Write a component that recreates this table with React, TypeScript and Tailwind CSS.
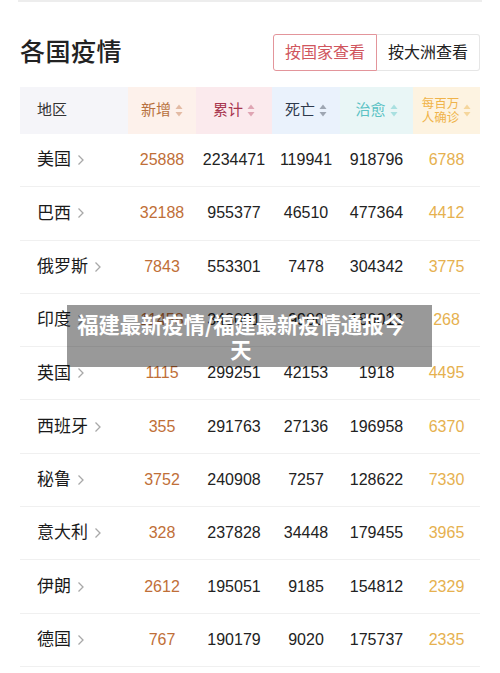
import React from "react";

type Row = [string, string, string, string, string, string];

const rows: Row[] = [
  ["美国", "25888", "2234471", "119941", "918796", "6788"],
  ["巴西", "32188", "955377", "46510", "477364", "4412"],
  ["俄罗斯", "7843", "553301", "7478", "304342", "3775"],
  ["印度", "11458", "343091", "9900", "180013", "268"],
  ["英国", "1115", "299251", "42153", "1918", "4495"],
  ["西班牙", "355", "291763", "27136", "196958", "6370"],
  ["秘鲁", "3752", "240908", "7257", "128622", "7330"],
  ["意大利", "328", "237828", "34448", "179455", "3965"],
  ["伊朗", "2612", "195051", "9185", "154812", "2329"],
  ["德国", "767", "190179", "9020", "175737", "2335"],
];

function SortIcon({ color }: { color: string }) {
  return (
    <svg width="8" height="13" viewBox="0 0 8 13" className="ml-[4px] shrink-0">
      <path d="M4 0.5 L7.5 5 L0.5 5 Z" fill={color} />
      <path d="M4 12.5 L7.5 8 L0.5 8 Z" fill={color} />
    </svg>
  );
}

function Chevron() {
  return (
    <svg width="8" height="12" viewBox="0 0 8 12" className="ml-[6px]">
      <path d="M1.5 1.5 L6 6 L1.5 10.5" fill="none" stroke="#a8a8a8" strokeWidth="1.3" />
    </svg>
  );
}

export default function App() {
  return (
    <div
      className="w-[500px] h-[673px] bg-white relative overflow-hidden"
      style={{ fontFamily: '"Liberation Sans", "Noto Sans CJK SC", sans-serif' }}
    >
      <div className="mx-[18px] h-[2px] bg-[#ededed]" />

      {/* 标题 + 切换 */}
      <div className="flex items-center justify-between px-[20px] mt-[32px] h-[37px]">
        <h1 className="text-[25px] font-medium text-[#222] tracking-[0.5px]">各国疫情</h1>
        <div className="flex h-[37px]">
          <div className="w-[104px] flex items-center justify-center border border-[#e3959b] rounded-l-[3px] text-[16px] text-[#d0565e]">
            按国家查看
          </div>
          <div className="w-[103px] flex items-center justify-center border border-l-0 border-[#e6e6e6] rounded-r-[3px] text-[16px] text-[#222]">
            按大洲查看
          </div>
        </div>
      </div>

      {/* 表格 */}
      <div className="mx-[20px] mt-[16px]">
        <div className="grid grid-cols-[108px_68px_76px_68px_73px_67px] h-[47px] text-[15px]">
          <div className="bg-[#f5f5f9] flex items-center pl-[17px] text-[#333]">地区</div>
          <div className="bg-[#fdf1eb] flex items-center justify-center text-[#b8713f]">
            新增<SortIcon color="#e3bba4" />
          </div>
          <div className="bg-[#fbeaed] flex items-center justify-center text-[#a8364f]">
            累计<SortIcon color="#dfa5b3" />
          </div>
          <div className="bg-[#eaf2fc] flex items-center justify-center text-[#2f3a4c]">
            死亡<SortIcon color="#9ea6b2" />
          </div>
          <div className="bg-[#e9f6f6] flex items-center justify-center text-[#5ac2c4]">
            治愈<SortIcon color="#a9e0e0" />
          </div>
          <div className="bg-[#fdf3e1] flex items-center justify-center text-[#f0b34a]">
            <span className="text-[12.5px] leading-[14px] text-center">
              每百万
              <br />
              人确诊
            </span>
            <SortIcon color="#f5d69c" />
          </div>
        </div>

        {rows.map((r) => (
          <div
            key={r[0]}
            className="grid grid-cols-[108px_68px_76px_68px_73px_67px] h-[53.3px] border-b border-[#f0f0f0] items-center text-[16px]"
          >
            <div className="flex items-center pl-[17px] text-[17px] text-[#1a1a1a]">
              {r[0]}
              <Chevron />
            </div>
            <div className="text-center text-[#bf6f38]">{r[1]}</div>
            <div className="text-center text-[#222]">{r[2]}</div>
            <div className="text-center text-[#222]">{r[3]}</div>
            <div className="text-center text-[#222]">{r[4]}</div>
            <div className="text-center text-[#e6b14f]">{r[5]}</div>
          </div>
        ))}
      </div>

      {/* 水印标题 */}
      <div className="absolute left-[67px] top-[305px] w-[365px] h-[62px] bg-black/40 flex items-center pl-[8px] pr-[25px]">
        <p
          className="w-full text-center text-white font-bold text-[21.3px] leading-[25px]"
          style={{ fontFamily: '"Noto Sans CJK SC", sans-serif' }}
        >
          福建最新疫情/福建最新疫情通报今天
        </p>
      </div>
    </div>
  );
}
